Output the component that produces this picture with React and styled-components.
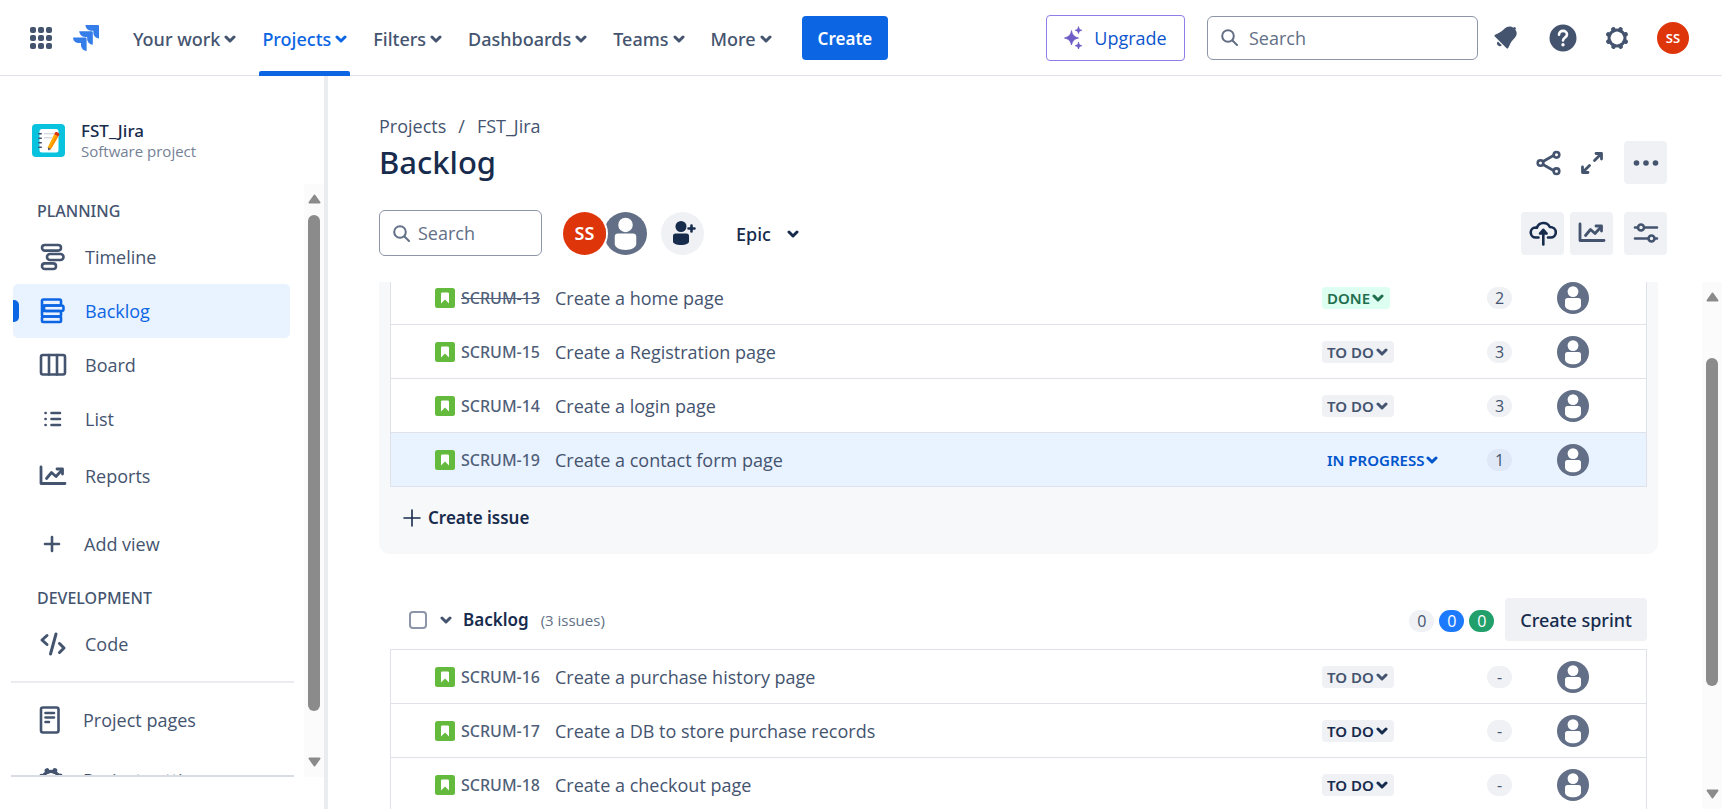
import React from 'react';
import styled, { createGlobalStyle, css } from 'styled-components';

const c = {
  text: '#44546f',
  strong: '#172b4d',
  subtle: '#626f86',
  brand: '#0c66e4',
  line: '#dfe2e8',
  neutral: '#eff1f4',
  selected: '#e9f2ff',
};
const body = '"Open Sans", "Noto Sans", sans-serif';
const medium = '"Noto Sans", "Open Sans", sans-serif';

const GlobalStyle = createGlobalStyle`
  *, *::before, *::after { box-sizing: border-box; }
  body { margin: 0; background: #fff; color: ${c.text}; font: 400 18px/24px ${body}; }
  button, input { font: inherit; color: inherit; margin: 0; }
  button { border: 0; padding: 0; background: none; cursor: pointer; }
  a { color: inherit; text-decoration: none; }
  ul, ol { list-style: none; margin: 0; padding: 0; }
  h1, h2, h3, p { margin: 0; }
  svg { display: block; flex: none; }
`;

/* ---------- icons ---------- */

const Svg = ({ w = 24, h = w, box = `0 0 ${w} ${h}`, sw = 2, children }) => (
  <svg width={w} height={h} viewBox={box} fill="none" stroke="currentColor" strokeWidth={sw}
    strokeLinecap="round" strokeLinejoin="round" aria-hidden="true">{children}</svg>
);

const Chevron = ({ sw = 3 }) => <Svg w={12} h={8} sw={sw}><path d="M2 2l4 4 4-4" /></Svg>;

const AppGrid = () => (
  <Svg w={22}>
    <g fill="currentColor" stroke="none">
      {[0, 8, 16].map(y => [0, 8, 16].map(x => <rect key={`${x}-${y}`} x={x} y={y} width="6" height="6" rx="2" />))}
    </g>
  </Svg>
);

const JiraMark = () => (
  <Svg w={26} box="0 0 24 24">
    <path fill="#357de8" stroke="none" d="M11.571 11.513H0a5.218 5.218 0 0 0 5.232 5.215h2.13v2.057A5.215 5.215 0 0 0 12.575 24V12.518a1.005 1.005 0 0 0-1.005-1.005zm5.723-5.756H5.736a5.215 5.215 0 0 0 5.215 5.214h2.129v2.058a5.218 5.218 0 0 0 5.215 5.214V6.758a1.001 1.001 0 0 0-1.001-1.001zM23.013 0H11.455a5.215 5.215 0 0 0 5.215 5.215h2.129v2.057A5.215 5.215 0 0 0 24 12.483V1.005A1.001 1.001 0 0 0 23.013 0Z" />
  </Svg>
);

const Sparkle = () => (
  <Svg w={18} h={24}>
    <g fill="#6e5dc6" stroke="#6e5dc6" strokeWidth=".8">
      <path d="M7.500 5c1.200 4.300 2.600 5.700 7 7-4.400 1.200-5.800 2.600-7 7-1.200-4.400-2.600-5.800-7-7 4.400-1.300 5.800-2.700 7-7z" />
      <path d="M14.500 1c.5 2.100 1.200 2.800 3.300 3.300-2.100.5-2.800 1.200-3.300 3.300-.5-2.100-1.200-2.800-3.300-3.300 2.100-.5 2.800-1.200 3.300-3.300z" />
      <path d="M14.500 16.400c.5 2.100 1.200 2.800 3.300 3.300-2.100.5-2.800 1.200-3.300 3.300-.5-2.100-1.200-2.800-3.300-3.300 2.100-.5 2.800-1.200 3.300-3.300z" />
    </g>
  </Svg>
);

const Magnifier = () => <Svg w={17}><circle cx="7" cy="7" r="5.800" /><path d="M11.500 11.500L16 16" /></Svg>;

const Bell = () => (
  <Svg w={33} box="0 0 24 24">
    <path fill="currentColor" stroke="none" d="M6.485 17.669a2 2 0 002.829 0l-2.829-2.83a2 2 0 000 2.83zm4.897-12.191l-.725.725c-.782.782-2.21 1.813-3.206 2.311l-3.017 1.509c-.495.248-.584.774-.187 1.171l8.556 8.556c.398.396.922.313 1.171-.188l1.510-3.016c.494-.988 1.526-2.420 2.311-3.206l.725-.726a5.048 5.048 0 00.64-6.356 1.010 1.010 0 10-1.354-1.494c-.023.025-.046.049-.066.075a5.043 5.043 0 00-2.788-.84 5.036 5.036 0 00-3.570 1.478z" />
  </Svg>
);

const Help = () => (
  <Svg w={28}>
    <circle cx="14" cy="14" r="13.500" fill="currentColor" stroke="none" />
    <path stroke="#fff" strokeWidth="2.600" d="M10 10.800c0-2.300 1.700-3.900 4-3.900s4 1.500 4 3.600c0 2.900-4 3-4 6" />
    <circle cx="14" cy="20.800" r="1.700" fill="#fff" stroke="none" />
  </Svg>
);

const Gear = ({ w = 26 }) => (
  <Svg w={w} box="0 0 26 26" sw={3}>
    <circle cx="13" cy="13" r="8" />
    {[0, 45, 90, 135, 180, 225, 270, 315].map(a => (
      <path key={a} strokeWidth="4.600" d="M13 3.600v.8" transform={`rotate(${a + 22} 13 13)`} />
    ))}
  </Svg>
);

const SettingsIcon = () => <Gear w={28} />;

const Timeline = () => (
  <Svg w={28} sw={2.600}>
    <rect x="3" y="2" width="19" height="5.600" rx="2.800" />
    <rect x="8" y="11" width="16.500" height="6" rx="3" />
    <rect x="3" y="20.400" width="14" height="5.600" rx="2.800" />
  </Svg>
);

const BacklogIcon = () => (
  <Svg w={28} sw={2.600}>
    <rect x="3" y="2.500" width="19" height="6" rx="1.500" />
    <rect x="5" y="8.500" width="19.500" height="5.500" rx="2" />
    <rect x="3" y="14" width="19" height="5.500" rx="1" />
    <rect x="3" y="19.500" width="19" height="5.500" rx="1" />
    <path d="M3 8.500v5.500" />
  </Svg>
);

const Board = () => (
  <Svg w={28} sw={2.600}>
    <rect x="2" y="4" width="24" height="19.500" rx="2" />
    <path d="M10 4v19.500M18 4v19.500" />
  </Svg>
);

const ListIcon = () => (
  <Svg w={28} sw={2.600}>
    <path d="M6.500 8h.2M6.500 14h.2M6.500 20h.2M12.500 8h8.500M12.500 14h8.500M12.500 20h8.500" />
  </Svg>
);

const Reports = () => (
  <Svg w={28} sw={2.800}>
    <path d="M2 5v16.500h24" /><path d="M7.500 16.500l5-6 4.500 4 6-6.500" /><path d="M18 7h5.500v5" />
  </Svg>
);

const Plus = ({ w = 28, arm = 7, sw = 2.600 }) => (
  <Svg w={w} sw={sw}><path d={`M${w / 2} ${w / 2 - arm}v${arm * 2}M${w / 2 - arm} ${w / 2}h${arm * 2}`} /></Svg>
);

const Code = () => (
  <Svg w={28} sw={3}><path d="M8 5.500l-5 4.500 5 4.500M20.500 13.500l4.500 4.500-4.500 4.500M17 4L11.500 24" /></Svg>
);

const Pages = () => (
  <Svg w={28} sw={2.600}>
    <rect x="4" y="1.500" width="17.500" height="25" rx="2" /><path d="M8.500 7h8.500M8.500 11.500h8.500M8.500 16h3.500" />
  </Svg>
);

const Share = () => (
  <Svg w={26} sw={2.600}>
    <path d="M7 11.500l10.500-6M7 14.500l10.500 6" />
    <circle cx="4.500" cy="13" r="2.800" /><circle cx="20.500" cy="4.800" r="2.800" /><circle cx="20.500" cy="21.200" r="2.800" />
  </Svg>
);

const Expand = () => (
  <Svg w={24} sw={2.800}>
    <path d="M14.500 9.500L21 3M16 2.500h5.500v5.500M9.500 14.500L3 21M2.500 16v5.500h5.500" />
  </Svg>
);

const More = () => (
  <Svg w={26}>
    <g fill="currentColor" stroke="none"><circle cx="3.500" cy="13" r="2.800" /><circle cx="13" cy="13" r="2.800" /><circle cx="22.500" cy="13" r="2.800" /></g>
  </Svg>
);

const CloudUp = () => (
  <Svg w={28} sw={2.600}>
    <path d="M9.500 18.500H7a5 5 0 0 1-.5-10c.5 0 1 .1 1.400.2A7 7 0 0 1 20.800 8c3.400 0 6 2.300 6 5.300s-2.300 5.200-5.200 5.200H19" />
    <path d="M14.300 25.500V12" /><path fill="currentColor" d="M11 14.500l3.300-3.700 3.300 3.700z" />
  </Svg>
);

const Sliders = () => (
  <Svg w={26} sw={2.600}>
    <path d="M2 7.500h2.500M11.500 7.500H24M2 18.500h13M22 18.500h2" />
    <circle cx="8" cy="7.500" r="3" /><circle cx="18.500" cy="18.500" r="3" />
  </Svg>
);

const Story = () => (
  <Svg w={20}>
    <rect width="20" height="20" rx="2.500" fill="#63ba3c" stroke="none" />
    <path d="M6 5.800A1.300 1.300 0 0 1 7.300 4.500h5.400A1.300 1.300 0 0 1 14 5.800V15.500l-4-4-4 4z" fill="#fff" stroke="none" />
  </Svg>
);

const Person = ({ w }) => (
  <Svg w={w} box="0 0 32 32">
    <circle cx="16" cy="16" r="16" fill="#626f86" stroke="none" />
    <circle cx="16" cy="9.600" r="5.400" fill="#fff" stroke="none" />
    <path d="M8 18.500a2.500 2.500 0 0 1 2.500-2.500h11a2.500 2.500 0 0 1 2.500 2.500v5c0 3-3.500 4.800-8 4.800s-8-1.800-8-4.800z" fill="#fff" stroke="none" />
  </Svg>
);

const AddPerson = () => (
  <Svg w={26} sw={2.600}>
    <circle cx="11" cy="6.500" r="5.500" fill="currentColor" stroke="none" />
    <path d="M3 16a2.500 2.500 0 0 1 2.500-2.500h11A2.500 2.500 0 0 1 19 16v5.500c0 2-3.500 3.500-8 3.500s-8-1.500-8-3.500z" fill="currentColor" stroke="none" />
    <path d="M21.500 5.500v6M18.500 8.500h6" />
  </Svg>
);

const ProjectArt = () => (
  <Svg w={33} h={33}>
    <g stroke="none">
      <rect width="33" height="33" rx="4" fill="#09c2de" />
      <rect x="7.500" y="5" width="19" height="23.500" rx="2.500" fill="#fff" />
      <g fill="#42526e">{[9, 13.500, 18, 22.500].map(y => <rect key={y} x="6" y={y} width="4" height="1.400" rx=".7" />)}</g>
      <g fill="#d5dae3"><rect x="12" y="9" width="11" height="1.400" /><rect x="12" y="13" width="8" height="1.400" /></g>
      <path d="M22.200 10.200l4 2.400-7 12-2.500 1.400-.9-2.800z" fill="#ffab00" />
      <path d="M24.200 11.400l2 1.200-7 12-1.700.9z" fill="#ff8b00" />
      <path d="M22.200 10.200l1-1.700c1-1.300 4.700.8 4 2.400l-1 1.700z" fill="#de350b" />
      <path d="M15.900 23.500l3 1.500-2.500 1.500z" fill="#42526e" />
    </g>
  </Svg>
);

const Triangle = ({ down }) => (
  <Svg w={13} h={10} sw={2}><path fill="currentColor" d={down ? 'M1.500 1.500h10L6.500 8.500z' : 'M1.500 8.500h10L6.500 1.500z'} /></Svg>
);

/* ---------- shared parts ---------- */

const Page = styled.div`
  display: flex;
  flex-direction: column;
  height: 100vh;
  overflow: hidden;
`;

const ScrollTrack = styled.div`
  display: flex;
  flex-direction: column;
  align-items: center;
  flex: none;
  width: 20px;
  padding: 10px 0;
  background: #fbfbfb;
  color: #8b8b8b;
`;

const ScrollThumb = styled.div`
  width: 12px;
  flex: ${p => p.$size};
  margin-top: 11px;
  border-radius: 6px;
  background: #8b8b8b;
`;

const ScrollSpace = styled.div`
  flex: ${p => p.$size};
`;

const Scrollbar = ({ before, thumb, after }) => (
  <ScrollTrack aria-hidden="true">
    <Triangle />
    <ScrollSpace $size={before} />
    <ScrollThumb $size={thumb} />
    <ScrollSpace $size={after} />
    <Triangle down />
  </ScrollTrack>
);

const Initials = styled.span`
  display: grid;
  place-items: center;
  flex: none;
  width: ${p => p.$size}px;
  height: ${p => p.$size}px;
  border-radius: 50%;
  background: #de350b;
  color: #fff;
  font: 600 ${p => (p.$size > 40 ? 18 : 13)}px/24px ${medium};
`;

const SearchBox = styled.label`
  display: flex;
  align-items: center;
  gap: ${p => p.$gap}px;
  width: ${p => p.$width}px;
  height: ${p => p.$height}px;
  padding: 0 12px 0 13px;
  border: 1px solid #8c96a8;
  border-radius: 6px;
  color: ${c.subtle};
`;

const SearchInput = styled.input`
  flex: 1;
  min-width: 0;
  padding: 0;
  border: 0;
  outline: 0;
  background: none;
  &::placeholder { color: ${c.subtle}; opacity: 1; }
`;

/* ---------- top bar ---------- */

const TopBar = styled.header`
  display: flex;
  align-items: center;
  flex: none;
  height: 76px;
  padding: 0 33px 0 30px;
  border-bottom: 1px solid ${c.line};
`;

const LogoLink = styled.a`
  margin: 0 31px 0 21px;
`;

const NavList = styled.ul`
  display: flex;
  align-self: stretch;
  gap: 20px;
`;

const NavButton = styled.button`
  position: relative;
  display: flex;
  align-items: center;
  gap: 4px;
  height: 76px;
  padding: 1px 3px 0;
  font: 500 18px/24px ${medium};
  color: ${c.text};
  ${p => p.$active && css`
    color: ${c.brand};
    &::after {
      content: '';
      position: absolute;
      left: 0;
      right: 0;
      bottom: 0;
      height: 5px;
      border-radius: 2px 2px 0 0;
      background: ${c.brand};
    }
  `}
`;

const CreateButton = styled.button`
  height: 44px;
  margin-left: 27px;
  padding: 2px 16px 0;
  border-radius: 4px;
  background: ${c.brand};
  color: #fff;
  font: 600 17px/24px ${medium};
`;

const TopTools = styled.div`
  display: flex;
  align-items: center;
  margin-left: auto;
`;

const UpgradeButton = styled.button`
  display: flex;
  align-items: center;
  justify-content: center;
  gap: 12px;
  width: 139px;
  height: 46px;
  margin-right: 22px;
  border: 1px solid #8f7ee7;
  border-radius: 4px;
  color: #0c55cc;
`;

const ToolGroup = styled.div`
  display: flex;
  align-items: center;
  gap: 27px;
  margin-left: 11px;
`;

const ToolButton = styled.button`
  color: ${c.text};
`;

/* ---------- sidebar ---------- */

const Columns = styled.div`
  display: flex;
  flex: 1;
  min-height: 0;
`;

const Sidebar = styled.aside`
  display: flex;
  flex-direction: column;
  flex: none;
  width: 328px;
  padding-bottom: 32px;
  border-right: 4px solid #ebecf0;
`;

const ProjectHeader = styled.div`
  display: flex;
  align-items: center;
  gap: 16px;
  height: 108px;
  padding: 20px 32px 0;
`;

const ProjectText = styled.div`
  padding-top: 2px;
`;

const ProjectName = styled.p`
  font: 500 17px/20px ${medium};
  color: ${c.strong};
`;

const ProjectKind = styled.p`
  font: 400 15px/20px ${body};
  color: #758195;
`;

const SideScroll = styled.div`
  display: flex;
  flex: 1;
  min-height: 0;
`;

const SideNav = styled.nav`
  flex: 1;
  min-width: 0;
  margin: 0 10px 0 11px;
  padding-top: 14px;
  overflow: hidden;
  border-bottom: 2px solid #d8dce3;
`;

const SideHeading = styled.h2`
  padding: 0 26px;
  margin-bottom: 6px;
  font: 500 16px/26px ${medium};
  color: ${c.text};
`;

const SideLink = styled.a`
  position: relative;
  display: flex;
  align-items: center;
  gap: 18px;
  height: 54px;
  margin: 0 4px 0 2px;
  padding: 0 ${p => p.$inset || 26}px;
  border-radius: 5px;
  ${p => p.$active && css`
    background: ${c.selected};
    color: ${c.brand};
    &::before {
      content: '';
      position: absolute;
      left: 0;
      width: 6px;
      height: 22px;
      border-radius: 0 5px 5px 0;
      background: ${c.brand};
    }
  `}
`;

const SideGroup = styled.ul`
  padding-top: ${p => p.$top || 0}px;
`;

const SideRule = styled.hr`
  height: 2px;
  margin: 10px 0;
  border: 0;
  background: #ebecf0;
`;

const FooterLinks = styled.ul`
  display: grid;
  gap: 6px;
`;

/* ---------- main ---------- */

const Main = styled.main`
  display: flex;
  flex-direction: column;
  flex: 1;
  min-width: 0;
`;

const Heading = styled.div`
  display: flex;
  align-items: flex-end;
  justify-content: space-between;
  height: 108px;
  padding: 0 55px 0 51px;
`;

const Crumbs = styled.ol`
  display: flex;
  gap: 12px;
`;

const Title = styled.h1`
  padding-top: 2px;
  font: 500 31px/44px ${medium};
  color: ${c.strong};
`;

const Actions = styled.div`
  display: flex;
  align-items: center;
`;

const IconButton = styled.button`
  display: grid;
  place-items: center;
  width: 43px;
  height: 43px;
  margin-left: ${p => p.$gap || 0}px;
  border-radius: 4px;
  background: ${p => (p.$plain ? 'none' : c.neutral)};
  color: ${p => (p.$dark ? c.strong : c.text)};
`;

const Toolbar = styled.div`
  display: flex;
  align-items: center;
  justify-content: space-between;
  height: 46px;
  margin: 26px 55px 26px 51px;
`;

const Filters = styled.div`
  display: flex;
  align-items: center;
`;

const Avatars = styled.div`
  display: flex;
  margin: 0 14px 0 19px;
`;

const FrontAvatar = styled.button`
  z-index: 1;
  margin-right: -4px;
  border: 2px solid #fff;
  border-radius: 50%;
`;

const BackAvatar = styled.button`
  padding: 2px 0;
`;

const AddPeople = styled.button`
  display: grid;
  place-items: center;
  width: 43px;
  height: 43px;
  border-radius: 50%;
  background: ${c.neutral};
  color: ${c.strong};
`;

const EpicButton = styled.button`
  display: flex;
  align-items: center;
  gap: 16px;
  margin-left: 32px;
  padding-top: 2px;
  font: 500 18px/24px ${medium};
  color: ${c.strong};
`;

const ListArea = styled.div`
  display: flex;
  flex: 1;
  min-height: 0;
`;

const ListView = styled.div`
  flex: 1;
  min-width: 0;
  padding: 0 44px 0 51px;
  overflow: hidden;
`;

/* The sprint is scrolled so that its first row starts above the view. */
const Sprint = styled.section`
  margin-top: -12px;
  padding: 0 11px;
  border-radius: 0 0 11px 11px;
  background: #f7f8fa;
`;

const Backlog = styled.section`
  margin-top: 44px;
  padding: 0 11px;
`;

const Rows = styled.ul`
  border: 1px solid ${c.line};
  border-bottom: 0;
`;

const Row = styled.li`
  display: grid;
  grid-template-columns: 26px 94px 1fr 165px 70px 32px;
  align-items: center;
  height: 54px;
  padding: 0 57px 0 44px;
  border-bottom: 1px solid ${c.line};
  background: ${p => (p.$selected ? c.selected : '#fff')};
`;

const Key = styled.a`
  font: 500 16px/24px ${medium};
  color: #505f79;
  text-decoration: ${p => (p.$done ? 'line-through' : 'none')};
`;

const Summary = styled.span`
  overflow: hidden;
  white-space: nowrap;
  text-overflow: ellipsis;
`;

const tones = {
  done: ['#dcfff1', '#216e4e'],
  todo: [c.neutral, c.text],
  todoDark: [c.neutral, c.strong],
  progress: [c.selected, '#0055cc'],
};

const Status = styled.button`
  display: flex;
  align-items: center;
  gap: 2px;
  justify-self: start;
  height: 22px;
  padding: 0 6px 0 5px;
  border-radius: 4px;
  background: ${p => tones[p.$tone][0]};
  color: ${p => tones[p.$tone][1]};
  font: 600 15px/22px ${medium};
  white-space: nowrap;
`;

const pills = {
  plain: [c.neutral, c.text],
  selected: ['#dfe8f6', c.text],
  blue: ['#1d7afc', '#fff'],
  green: ['#22a06b', '#fff'],
};

const Pill = styled.span`
  display: grid;
  place-items: center;
  justify-self: start;
  width: 25px;
  height: 22px;
  border-radius: 11px;
  background: ${p => pills[p.$tone || 'plain'][0]};
  color: ${p => pills[p.$tone || 'plain'][1]};
  font: 400 16px/22px ${body};
`;

const CreateIssue = styled.button`
  display: flex;
  align-items: center;
  gap: 7px;
  height: 67px;
  padding: 0 13px 6px;
  font: 600 17px/24px ${medium};
  color: ${c.strong};
`;

const BacklogHeader = styled.div`
  display: flex;
  align-items: center;
  height: 43px;
  margin-bottom: 8px;
  padding-left: 19px;
`;

const Check = styled.input`
  appearance: none;
  width: 18px;
  height: 18px;
  border: 2px solid #8c96a8;
  border-radius: 4px;
`;

const Toggle = styled.button`
  margin: 0 11px 0 13px;
  color: ${c.text};
`;

const BacklogTitle = styled.h2`
  font: 600 17px/24px ${medium};
  color: ${c.strong};
`;

const Count = styled.span`
  margin-left: 12px;
  font: 400 15px/24px ${body};
  color: ${c.subtle};
`;

const Totals = styled.div`
  display: flex;
  gap: 5px;
  margin: 2px 11px 0 auto;
`;

const SprintButton = styled.button`
  height: 43px;
  padding: 0 15px;
  border-radius: 4px;
  background: ${c.neutral};
  color: ${c.strong};
  font: 500 18px/24px ${medium};
`;

/* ---------- data ---------- */

const menus = ['Your work', 'Projects', 'Filters', 'Dashboards', 'Teams', 'More'];

const planning = [
  ['Timeline', Timeline],
  ['Backlog', BacklogIcon],
  ['Board', Board],
  ['List', ListIcon],
];

const sprintIssues = [
  { id: 'SCRUM-13', name: 'Create a home page', status: 'DONE', tone: 'done', points: '2', done: true },
  { id: 'SCRUM-15', name: 'Create a Registration page', status: 'TO DO', tone: 'todo', points: '3' },
  { id: 'SCRUM-14', name: 'Create a login page', status: 'TO DO', tone: 'todo', points: '3' },
  { id: 'SCRUM-19', name: 'Create a contact form page', status: 'IN PROGRESS', tone: 'progress', points: '1', selected: true },
];

const backlogIssues = [
  { id: 'SCRUM-16', name: 'Create a purchase history page', status: 'TO DO', tone: 'todo', points: '-' },
  { id: 'SCRUM-17', name: 'Create a DB to store purchase records', status: 'TO DO', tone: 'todoDark', points: '-' },
  { id: 'SCRUM-18', name: 'Create a checkout page', status: 'TO DO', tone: 'todoDark', points: '-' },
];

const SideItem = ({ label, icon: Icon, active, inset }) => (
  <li>
    <SideLink href="#" $active={active} $inset={inset} aria-current={active ? 'page' : undefined}><Icon />{label}</SideLink>
  </li>
);

const IssueRow = ({ issue }) => (
  <Row $selected={issue.selected}>
    <Story />
    <Key href="#" $done={issue.done}>{issue.id}</Key>
    <Summary>{issue.name}</Summary>
    <Status $tone={issue.tone} aria-haspopup="listbox">{issue.status}<Chevron /></Status>
    <Pill $tone={issue.selected ? 'selected' : 'plain'}>{issue.points}</Pill>
    <button aria-label="Assignee"><Person w={32} /></button>
  </Row>
);

export default function App() {
  return (
    <>
      <GlobalStyle />
      <Page>
        <TopBar>
          <ToolButton aria-label="Switch app"><AppGrid /></ToolButton>
          <LogoLink href="#" aria-label="Jira home"><JiraMark /></LogoLink>
          <NavList>
            {menus.map(m => (
              <li key={m}><NavButton $active={m === 'Projects'} aria-haspopup="menu">{m}<Chevron /></NavButton></li>
            ))}
          </NavList>
          <CreateButton>Create</CreateButton>
          <TopTools>
            <UpgradeButton><Sparkle />Upgrade</UpgradeButton>
            <SearchBox $width={271} $height={44} $gap={11}>
              <Magnifier /><SearchInput type="search" aria-label="Search" placeholder="Search" />
            </SearchBox>
            <ToolGroup>
              <ToolButton aria-label="Notifications"><Bell /></ToolButton>
              <ToolButton aria-label="Help"><Help /></ToolButton>
              <ToolButton aria-label="Settings"><Gear /></ToolButton>
              <ToolButton aria-label="Your profile"><Initials $size={32}>SS</Initials></ToolButton>
            </ToolGroup>
          </TopTools>
        </TopBar>

        <Columns>
          <Sidebar>
            <ProjectHeader>
              <ProjectArt />
              <ProjectText>
                <ProjectName>FST_Jira</ProjectName>
                <ProjectKind>Software project</ProjectKind>
              </ProjectText>
            </ProjectHeader>
            <SideScroll>
              <SideNav>
                <SideHeading>PLANNING</SideHeading>
                <SideGroup>
                  {planning.map(([label, icon]) => (
                    <SideItem key={label} label={label} icon={icon} active={label === 'Backlog'} />
                  ))}
                </SideGroup>
                <SideGroup $top={3}><SideItem label="Reports" icon={Reports} /></SideGroup>
                <SideGroup $top={14}><SideItem label="Add view" icon={Plus} inset={25} /></SideGroup>
                <SideGroup $top={14}>
                  <li><SideHeading>DEVELOPMENT</SideHeading></li>
                  <SideItem label="Code" icon={Code} />
                </SideGroup>
                <SideRule />
                <FooterLinks>
                  <SideItem label="Project pages" icon={Pages} inset={24} />
                  <SideItem label="Project settings" icon={SettingsIcon} inset={24} />
                </FooterLinks>
              </SideNav>
              <Scrollbar before={0} thumb={495} after={46} />
            </SideScroll>
          </Sidebar>

          <Main>
            <Heading>
              <div>
                <Crumbs>
                  <li><a href="#">Projects</a></li>
                  <li aria-hidden="true">/</li>
                  <li><a href="#">FST_Jira</a></li>
                </Crumbs>
                <Title>Backlog</Title>
              </div>
              <Actions>
                <IconButton $plain aria-label="Share"><Share /></IconButton>
                <IconButton $plain aria-label="Full screen"><Expand /></IconButton>
                <IconButton $gap={11} aria-label="More actions"><More /></IconButton>
              </Actions>
            </Heading>
            <Toolbar>
              <Filters>
                <SearchBox $width={163} $height={46} $gap={8}>
                  <Magnifier /><SearchInput type="search" aria-label="Search backlog" placeholder="Search" />
                </SearchBox>
                <Avatars>
                  <FrontAvatar aria-label="Filter by SS"><Initials $size={43}>SS</Initials></FrontAvatar>
                  <BackAvatar aria-label="Filter by unassigned"><Person w={43} /></BackAvatar>
                </Avatars>
                <AddPeople aria-label="Add people"><AddPerson /></AddPeople>
                <EpicButton aria-haspopup="listbox">Epic<Chevron /></EpicButton>
              </Filters>
              <Actions>
                <IconButton $dark aria-label="Import work"><CloudUp /></IconButton>
                <IconButton $gap={6} aria-label="Insights"><Reports /></IconButton>
                <IconButton $gap={11} aria-label="View settings"><Sliders /></IconButton>
              </Actions>
            </Toolbar>
            <ListArea>
              <ListView>
                <Sprint>
                  <Rows>{sprintIssues.map(i => <IssueRow key={i.id} issue={i} />)}</Rows>
                  <CreateIssue><Plus w={18} arm={8} sw={1.600} />Create issue</CreateIssue>
                </Sprint>
                <Backlog>
                  <BacklogHeader>
                    <Check type="checkbox" aria-label="Select all backlog issues" />
                    <Toggle aria-label="Collapse backlog"><Chevron /></Toggle>
                    <BacklogTitle>Backlog</BacklogTitle>
                    <Count>(3 issues)</Count>
                    <Totals><Pill>0</Pill><Pill $tone="blue">0</Pill><Pill $tone="green">0</Pill></Totals>
                    <SprintButton>Create sprint</SprintButton>
                  </BacklogHeader>
                  <Rows>{backlogIssues.map(i => <IssueRow key={i.id} issue={i} />)}</Rows>
                </Backlog>
              </ListView>
              <Scrollbar before={45} thumb={329} after={103} />
            </ListArea>
          </Main>
        </Columns>
      </Page>
    </>
  );
}
